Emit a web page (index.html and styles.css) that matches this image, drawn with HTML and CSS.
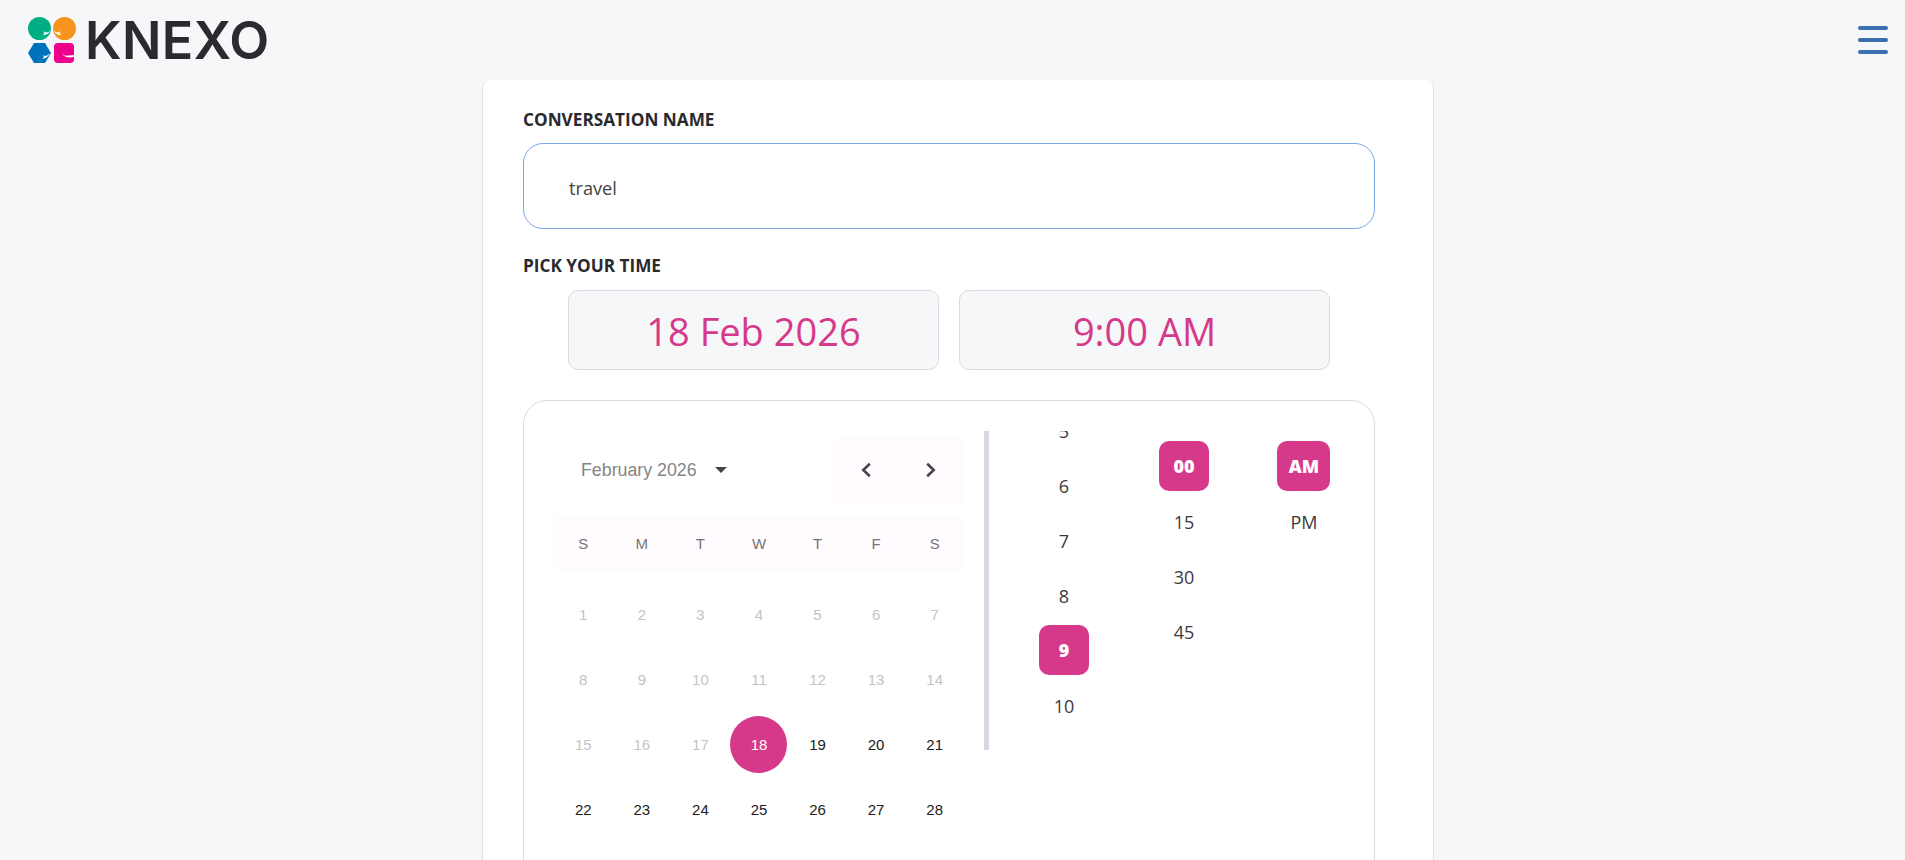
FILE: index.html
```html
<!DOCTYPE html>
<html lang="en">

<head>
    <meta charset="UTF-8">
    <meta name="viewport" content="width=device-width, initial-scale=1.0">
    <title>Knexo</title>
    <link rel="stylesheet" href="styles.css">
</head>

<body>
    <header class="topbar">
        <div class="logo">
            <svg class="logo-mark" width="48" height="46" viewBox="0 0 48 46">
                <circle cx="11.5" cy="11.5" r="11.5" fill="#00ae84"/>
                <path d="M15 13.5c1 2 3.500 2.500 5.500 1.500l2.500-1.500c-2 3-5.500 5-8.500 4.500l2-1.500z" fill="#fff"/>
                <circle cx="36.500" cy="11.500" r="11.500" fill="#f7941e"/>
                <path d="M33 13.500c-1 2-3.500 2.500-5.500 1.500l-2.500-1.500c2 3 5.500 5 8.500 4.500l-2-1.500z" fill="#fff"/>
                <path d="M6 26h11l6 10-6 10H6L0 36z" fill="#0072bc"/>
                <path d="M14 37c1 2 3 2.500 5 1.500l3-2c-2 3.500-5 5.500-8 5l2-1.500z" fill="#fff"/>
                <rect x="26" y="26" width="20" height="20" rx="4" fill="#ec008c"/>
                <path d="M34 36c1 2 3 3 6 2.500l6-.5v2c-4 1-8 .5-10.500-1.500z" fill="#fff"/>
            </svg>
            <span class="logo-text">KNEXO</span>
        </div>
        <div class="menu-btn">
            <span></span>
            <span></span>
            <span></span>
        </div>
    </header>

    <main class="page">
        <section class="card">
            <label class="field-label">CONVERSATION NAME</label>
            <input class="name-input" type="text" value="travel">

            <label class="field-label time-label">PICK YOUR TIME</label>
            <div class="picked">
                <div class="picked-box">18 Feb 2026</div>
                <div class="picked-box">9:00 AM</div>
            </div>

            <div class="picker">
                <div class="calendar">
                    <div class="cal-head">
                        <div class="cal-month">
                            <span>February 2026</span>
                            <i class="caret"></i>
                        </div>
                        <div class="cal-nav">
                            <button class="nav-btn">
                                <svg width="12" height="16" viewBox="0 0 12 16"><path d="M9.800 1.800 3.300 8l6.500 6.200" fill="none" stroke="#45454f" stroke-width="2.600"/></svg>
                            </button>
                            <button class="nav-btn">
                                <svg width="12" height="16" viewBox="0 0 12 16"><path d="M2.200 1.800 8.700 8l-6.500 6.200" fill="none" stroke="#45454f" stroke-width="2.600"/></svg>
                            </button>
                        </div>
                    </div>
                    <div class="cal-week">
                        <span>S</span><span>M</span><span>T</span><span>W</span><span>T</span><span>F</span><span>S</span>
                    </div>
                    <div class="cal-days">
                        <span class="off">1</span><span class="off">2</span><span class="off">3</span><span class="off">4</span><span class="off">5</span><span class="off">6</span><span class="off">7</span>
                        <span class="off">8</span><span class="off">9</span><span class="off">10</span><span class="off">11</span><span class="off">12</span><span class="off">13</span><span class="off">14</span>
                        <span class="off">15</span><span class="off">16</span><span class="off">17</span><span class="today"><b>18</b></span><span>19</span><span>20</span><span>21</span>
                        <span>22</span><span>23</span><span>24</span><span>25</span><span>26</span><span>27</span><span>28</span>
                    </div>
                </div>

                <div class="times">
                    <ul class="time-col hours">
                        <li>5</li>
                        <li>6</li>
                        <li>7</li>
                        <li>8</li>
                        <li class="active">9</li>
                        <li>10</li>
                    </ul>
                    <ul class="time-col">
                        <li class="active">00</li>
                        <li>15</li>
                        <li>30</li>
                        <li>45</li>
                    </ul>
                    <ul class="time-col">
                        <li class="active wide">AM</li>
                        <li>PM</li>
                    </ul>
                </div>
            </div>
        </section>
    </main>
</body>

</html>
```

FILE: styles.css
```css
html,
body {
    height: 100%;
    overflow: hidden;
}

body {
    margin: 0;
    background-color: #f6f7f9;
    font-family: "Open Sans", "Liberation Sans", sans-serif;
    color: #3a3a3a;
}

/* header */
.topbar {
    display: flex;
    justify-content: space-between;
    align-items: center;
    height: 80px;
    padding: 0 17px 0 28px;
}

.logo {
    display: flex;
    align-items: center;
    gap: 9px;
    margin-top: -1px;
}

.logo-mark {
    display: block;
}

.logo-text {
    padding-top: 2px;
    font-family: "Inter", sans-serif;
    font-size: 52px;
    font-weight: 600;
    line-height: 46px;
    letter-spacing: .4px;
    color: #2b2b2f;
}

.menu-btn {
    display: flex;
    flex-direction: column;
    gap: 8px;
    width: 30px;
}

.menu-btn span {
    height: 4px;
    border-radius: 2px;
    background-color: #3a6fb0;
}

/* main card */
.page {
    padding-left: 482px;
}

.card {
    box-sizing: border-box;
    width: 952px;
    height: 800px;
    padding: 28px 57px 0 40px;
    background-color: #fff;
    border: 1px solid #dfe2e8;
    border-top: 0;
    border-radius: 8px;
}

.field-label {
    display: block;
    margin-bottom: 11px;
    font-size: 17.200px;
    font-weight: 700;
    line-height: 24px;
    color: #2a2a2e;
}

.time-label {
    margin-top: 25px;
    margin-bottom: 12px;
}

.name-input {
    display: block;
    box-sizing: border-box;
    width: 852px;
    height: 86px;
    padding: 4px 45px 0;
    border: 1px solid #7aa9e8;
    border-radius: 20px;
    outline: none;
    font-family: inherit;
    font-size: 18.200px;
    color: #444;
}

.picked {
    display: flex;
    gap: 20px;
    margin-left: 45px;
}

.picked-box {
    display: flex;
    justify-content: center;
    align-items: center;
    box-sizing: border-box;
    width: 371px;
    height: 80px;
    padding-top: 1px;
    background-color: #f6f7f9;
    border: 1px solid #d8dae2;
    border-radius: 10px;
    font-size: 38px;
    color: #d6398a;
}

/* calendar + time box */
.picker {
    display: flex;
    gap: 20px;
    box-sizing: border-box;
    width: 852px;
    height: 520px;
    margin-top: 30px;
    padding: 30px 0 0 30px;
    border: 1px solid #d8dae2;
    border-radius: 24px;
}

.calendar {
    width: 411px;
    padding-top: 6px;
    font-family: "Liberation Sans", Arial, sans-serif;
}

.cal-head {
    display: flex;
    justify-content: space-between;
    height: 66px;
}

.cal-month {
    display: flex;
    align-items: center;
    gap: 18px;
    padding-left: 27px;
    font-size: 17.800px;
    color: #858585;
}

.caret {
    width: 0;
    height: 0;
    border-left: 6.500px solid transparent;
    border-right: 6.500px solid transparent;
    border-top: 6.500px solid #444;
}

.cal-nav {
    display: flex;
    width: 130px;
    background-color: #fffbff;
}

.nav-btn {
    display: flex;
    justify-content: center;
    align-items: center;
    flex: 1;
    padding: 0;
    border: 0;
    background: none;
}

.cal-week {
    display: grid;
    grid-template-columns: repeat(7, 1fr);
    align-items: center;
    height: 55px;
    margin-top: 13px;
    background-color: #fffbff;
    font-size: 15px;
    color: #757575;
    text-align: center;
}

.cal-days {
    display: grid;
    grid-template-columns: repeat(7, 1fr);
    grid-auto-rows: 65px;
    margin-top: 11px;
    font-size: 15px;
    color: #212121;
}

.cal-days span {
    display: flex;
    justify-content: center;
    align-items: center;
}

.cal-days .off {
    color: #c4c4c4;
}

.today b {
    display: flex;
    justify-content: center;
    align-items: center;
    width: 57px;
    height: 57px;
    border-radius: 50%;
    background-color: #d6398a;
    font-weight: 400;
    color: #fff;
}

/* time columns */
.times {
    display: flex;
    width: 371px;
    height: 319px;
    padding-left: 15px;
    border-left: 5px solid #d6d9e3;
    overflow: hidden;
}

.time-col {
    display: flex;
    flex-direction: column;
    align-items: center;
    flex: 0 0 120px;
    margin: 0;
    padding: 10px 0 0;
    list-style: none;
    font-size: 18px;
}

.hours {
    margin-top: -28px;
    padding-top: 0;
}

.time-col li {
    display: flex;
    flex: none;
    justify-content: center;
    align-items: center;
    height: 55px;
}

.time-col .active {
    box-sizing: border-box;
    width: 50px;
    height: 50px;
    margin-bottom: 3px;
    background-color: #d6398a;
    border-radius: 10px;
    font-weight: 800;
    color: #fff;
}

.time-col .wide {
    width: 53px;
}

.hours .active {
    margin-top: 2px;
}
```
